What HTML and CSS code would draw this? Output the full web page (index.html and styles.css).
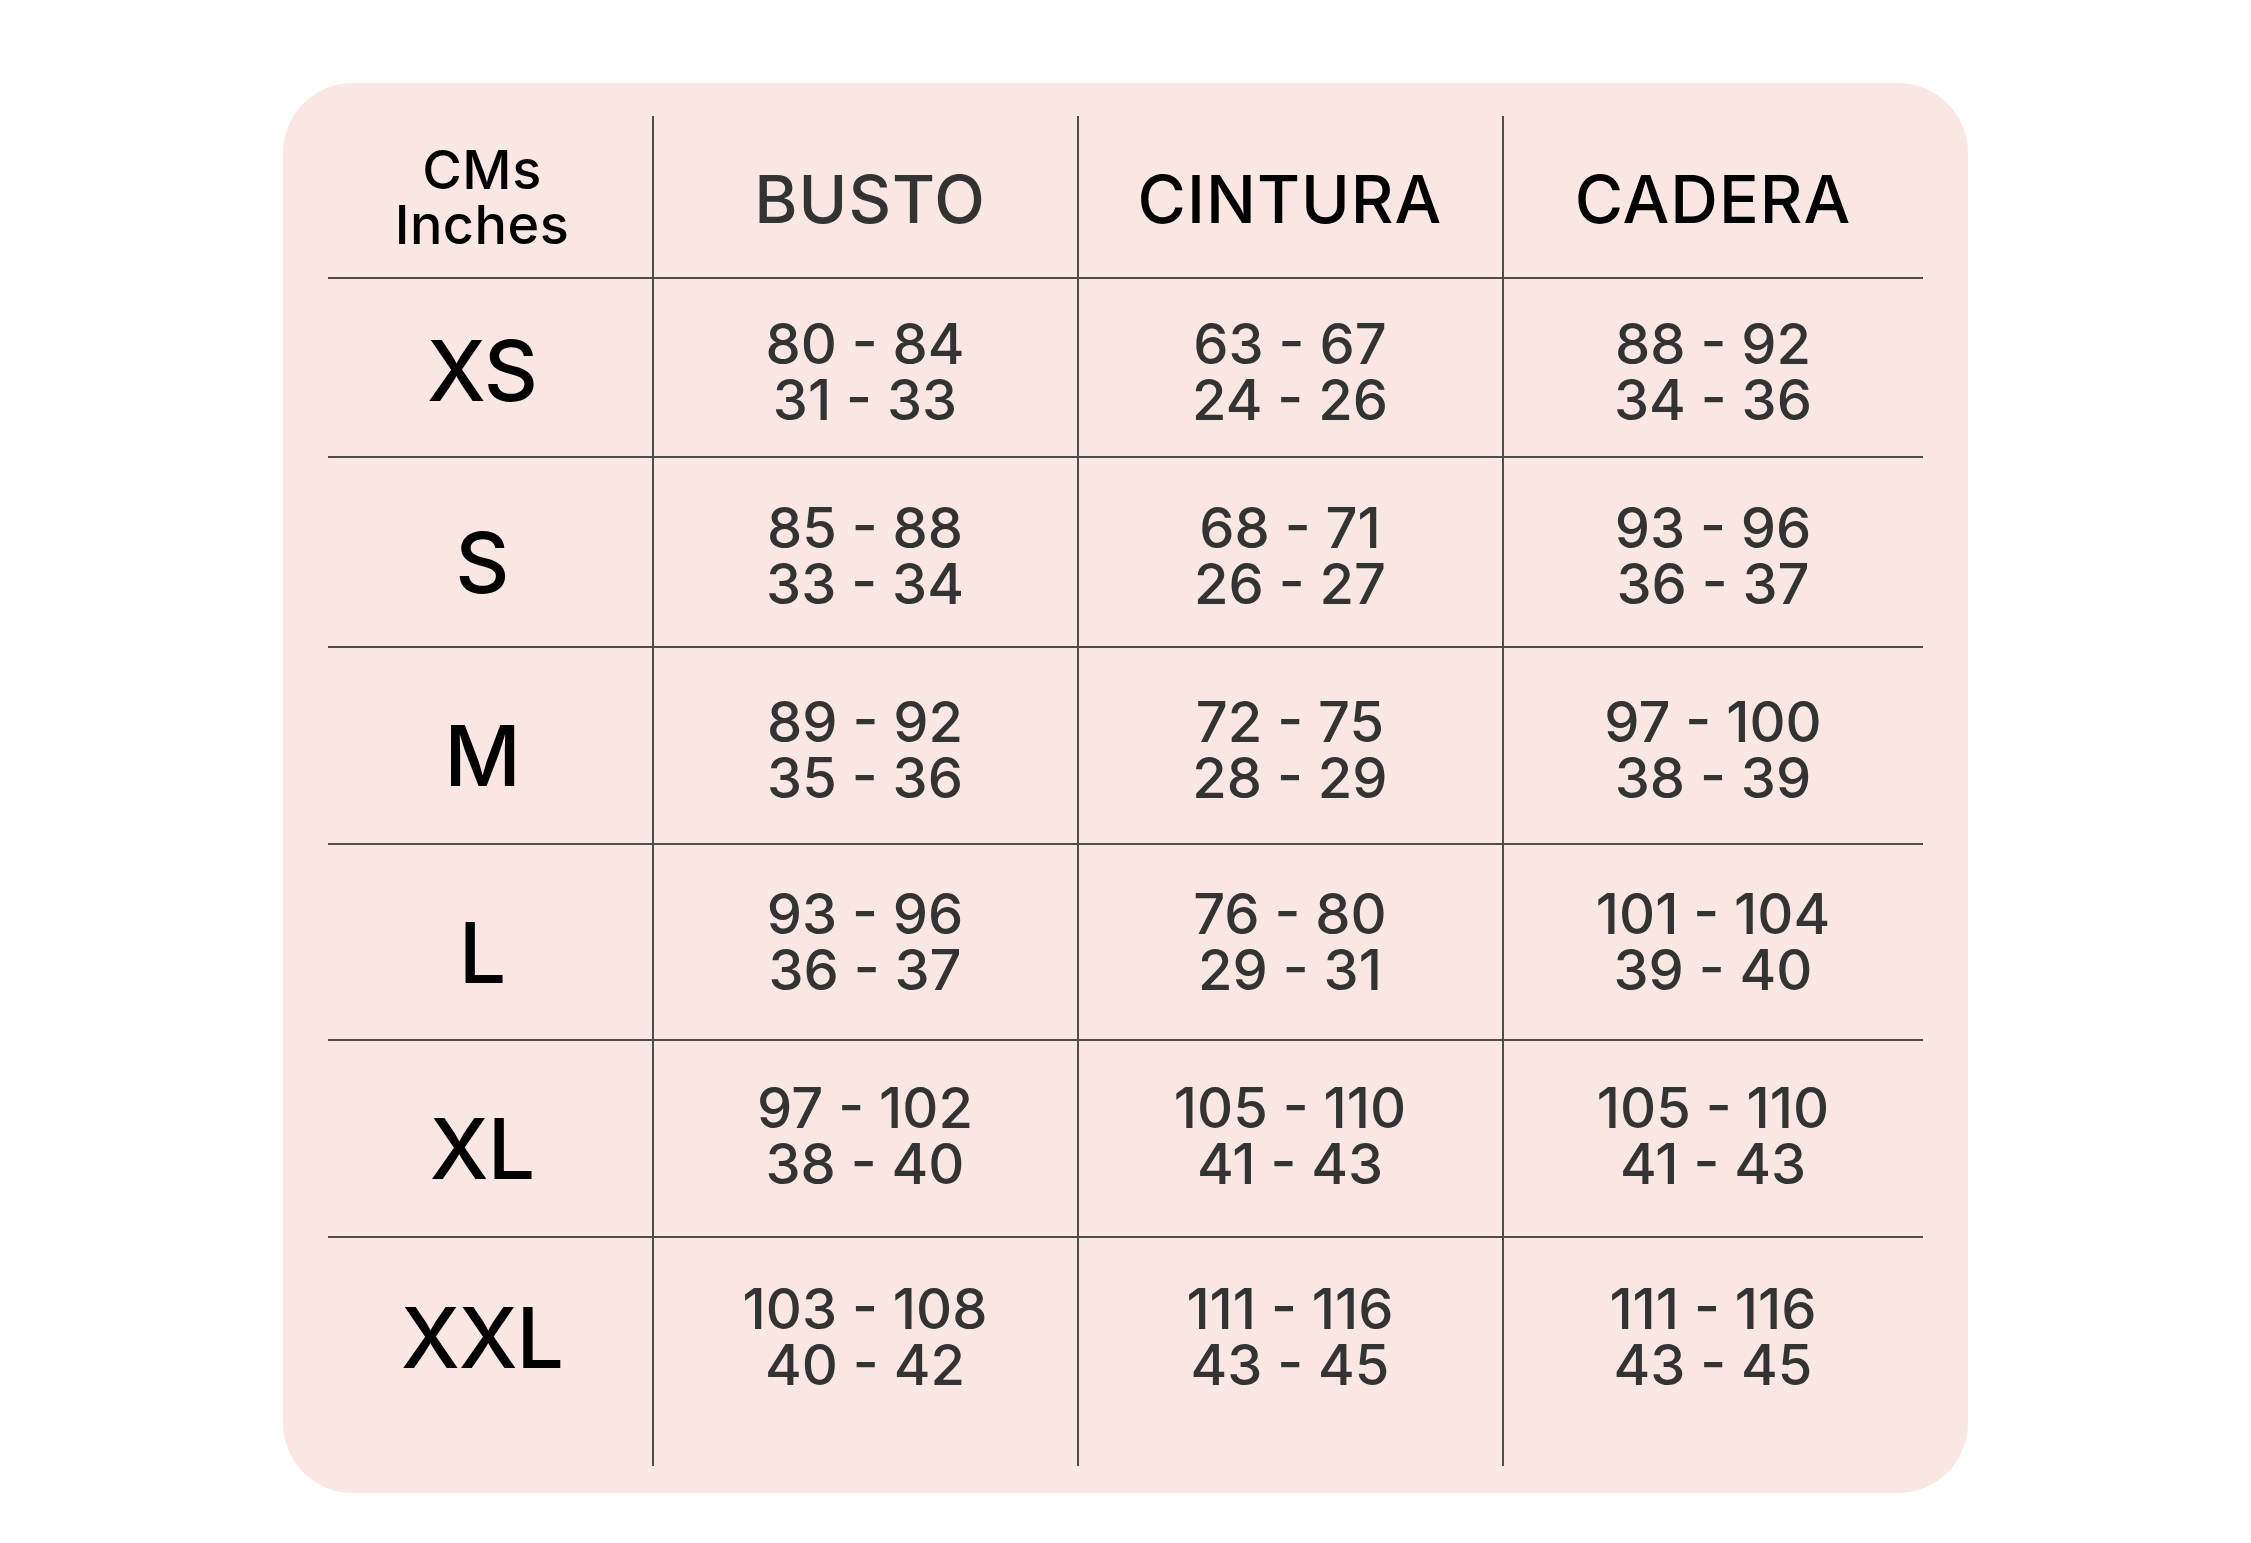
FILE: index.html
```html
<!DOCTYPE html>
<html lang="es">
<head>
<meta charset="utf-8">
<title>Guía de tallas</title>
<link rel="stylesheet" href="styles.css">
</head>
<body>
<div class="card">
  <div class="chart">
    <div class="cell head units"><span class="cms">CMs</span><span class="inches">Inches</span></div>
    <div class="cell head gray">BUSTO</div>
    <div class="cell head">CINTURA</div>
    <div class="cell head last-col">CADERA</div>

    <div class="cell size first">XS</div>
    <div class="cell num">80 - 84<br>31 - 33</div>
    <div class="cell num">63 - 67<br>24 - 26</div>
    <div class="cell num last-col">88 - 92<br>34 - 36</div>

    <div class="cell size">S</div>
    <div class="cell num">85 - 88<br>33 - 34</div>
    <div class="cell num">68 - 71<br>26 - 27</div>
    <div class="cell num last-col">93 - 96<br>36 - 37</div>

    <div class="cell size">M</div>
    <div class="cell num">89 - 92<br>35 - 36</div>
    <div class="cell num">72 - 75<br>28 - 29</div>
    <div class="cell num last-col">97 - 100<br>38 - 39</div>

    <div class="cell size">L</div>
    <div class="cell num raise">93 - 96<br>36 - 37</div>
    <div class="cell num raise">76 - 80<br>29 - 31</div>
    <div class="cell num raise last-col">101 - 104<br>39 - 40</div>

    <div class="cell size">XL</div>
    <div class="cell num raise-more">97 - 102<br>38 - 40</div>
    <div class="cell num raise-more">105 - 110<br>41 - 43</div>
    <div class="cell num raise-more last-col">105 - 110<br>41 - 43</div>

    <div class="cell size last-row">XXL</div>
    <div class="cell num last-row">103 - 108<br>40 - 42</div>
    <div class="cell num last-row">111 - 116<br>43 - 45</div>
    <div class="cell num last-row last-col">111 - 116<br>43 - 45</div>
  </div>
</div>
</body>
</html>
```

FILE: styles.css
```css
html, body {
  margin: 0;
  padding: 0;
  background: #ffffff;
}

body {
  font-family: "Inter", "Open Sans", "DejaVu Sans", sans-serif;
  width: 2251px;
  height: 1543px;
  overflow: hidden;
}

.card {
  margin: 83px 0 0 283px;
  width: 1685px;
  height: 1410px;
  box-sizing: border-box;
  padding: 33px 0 0 45px;
  background: #f9e7e4;
  border-radius: 70px;
}

.chart {
  display: grid;
  grid-template-columns: 325px 425px 425px 420px;
  grid-template-rows: 163px 179px 190px 197px 196px 197px 228px;
}

.cell {
  display: flex;
  align-items: center;
  justify-content: center;
  text-align: center;
  border-right: 2px solid #4d4d4d;
  border-bottom: 2px solid #4d4d4d;
  margin-right: -1px;
  box-sizing: border-box;
}

.last-col {
  border-right: none;
  margin-right: 0;
}

.last-row {
  border-bottom: none;
  padding-bottom: 38px;
}

.head {
  font-size: 66px;
  font-weight: 500;
  color: #000000;
  letter-spacing: 1px;
  padding-top: 4px;
}

.head.gray {
  color: #333333;
  padding-left: 10px;
}

.units {
  flex-direction: column;
  font-size: 54px;
  line-height: 55px;
  letter-spacing: 0.5px;
  padding-right: 16px;
  padding-top: 0;
}

.size {
  font-size: 84px;
  letter-spacing: -1px;
  font-weight: 500;
  color: #000000;
  padding-right: 16px;
  padding-top: 20px;
}

.size.first {
  padding-top: 6px;
}

.size.last-row {
  padding-top: 0;
  padding-bottom: 30px;
}

.num {
  font-size: 56px;
  line-height: 56px;
  font-weight: 500;
  color: #333333;
  padding-top: 8px;
}

.num.raise {
  padding-top: 0;
}

.num.raise-more {
  padding-top: 0;
  padding-bottom: 6px;
}
```
